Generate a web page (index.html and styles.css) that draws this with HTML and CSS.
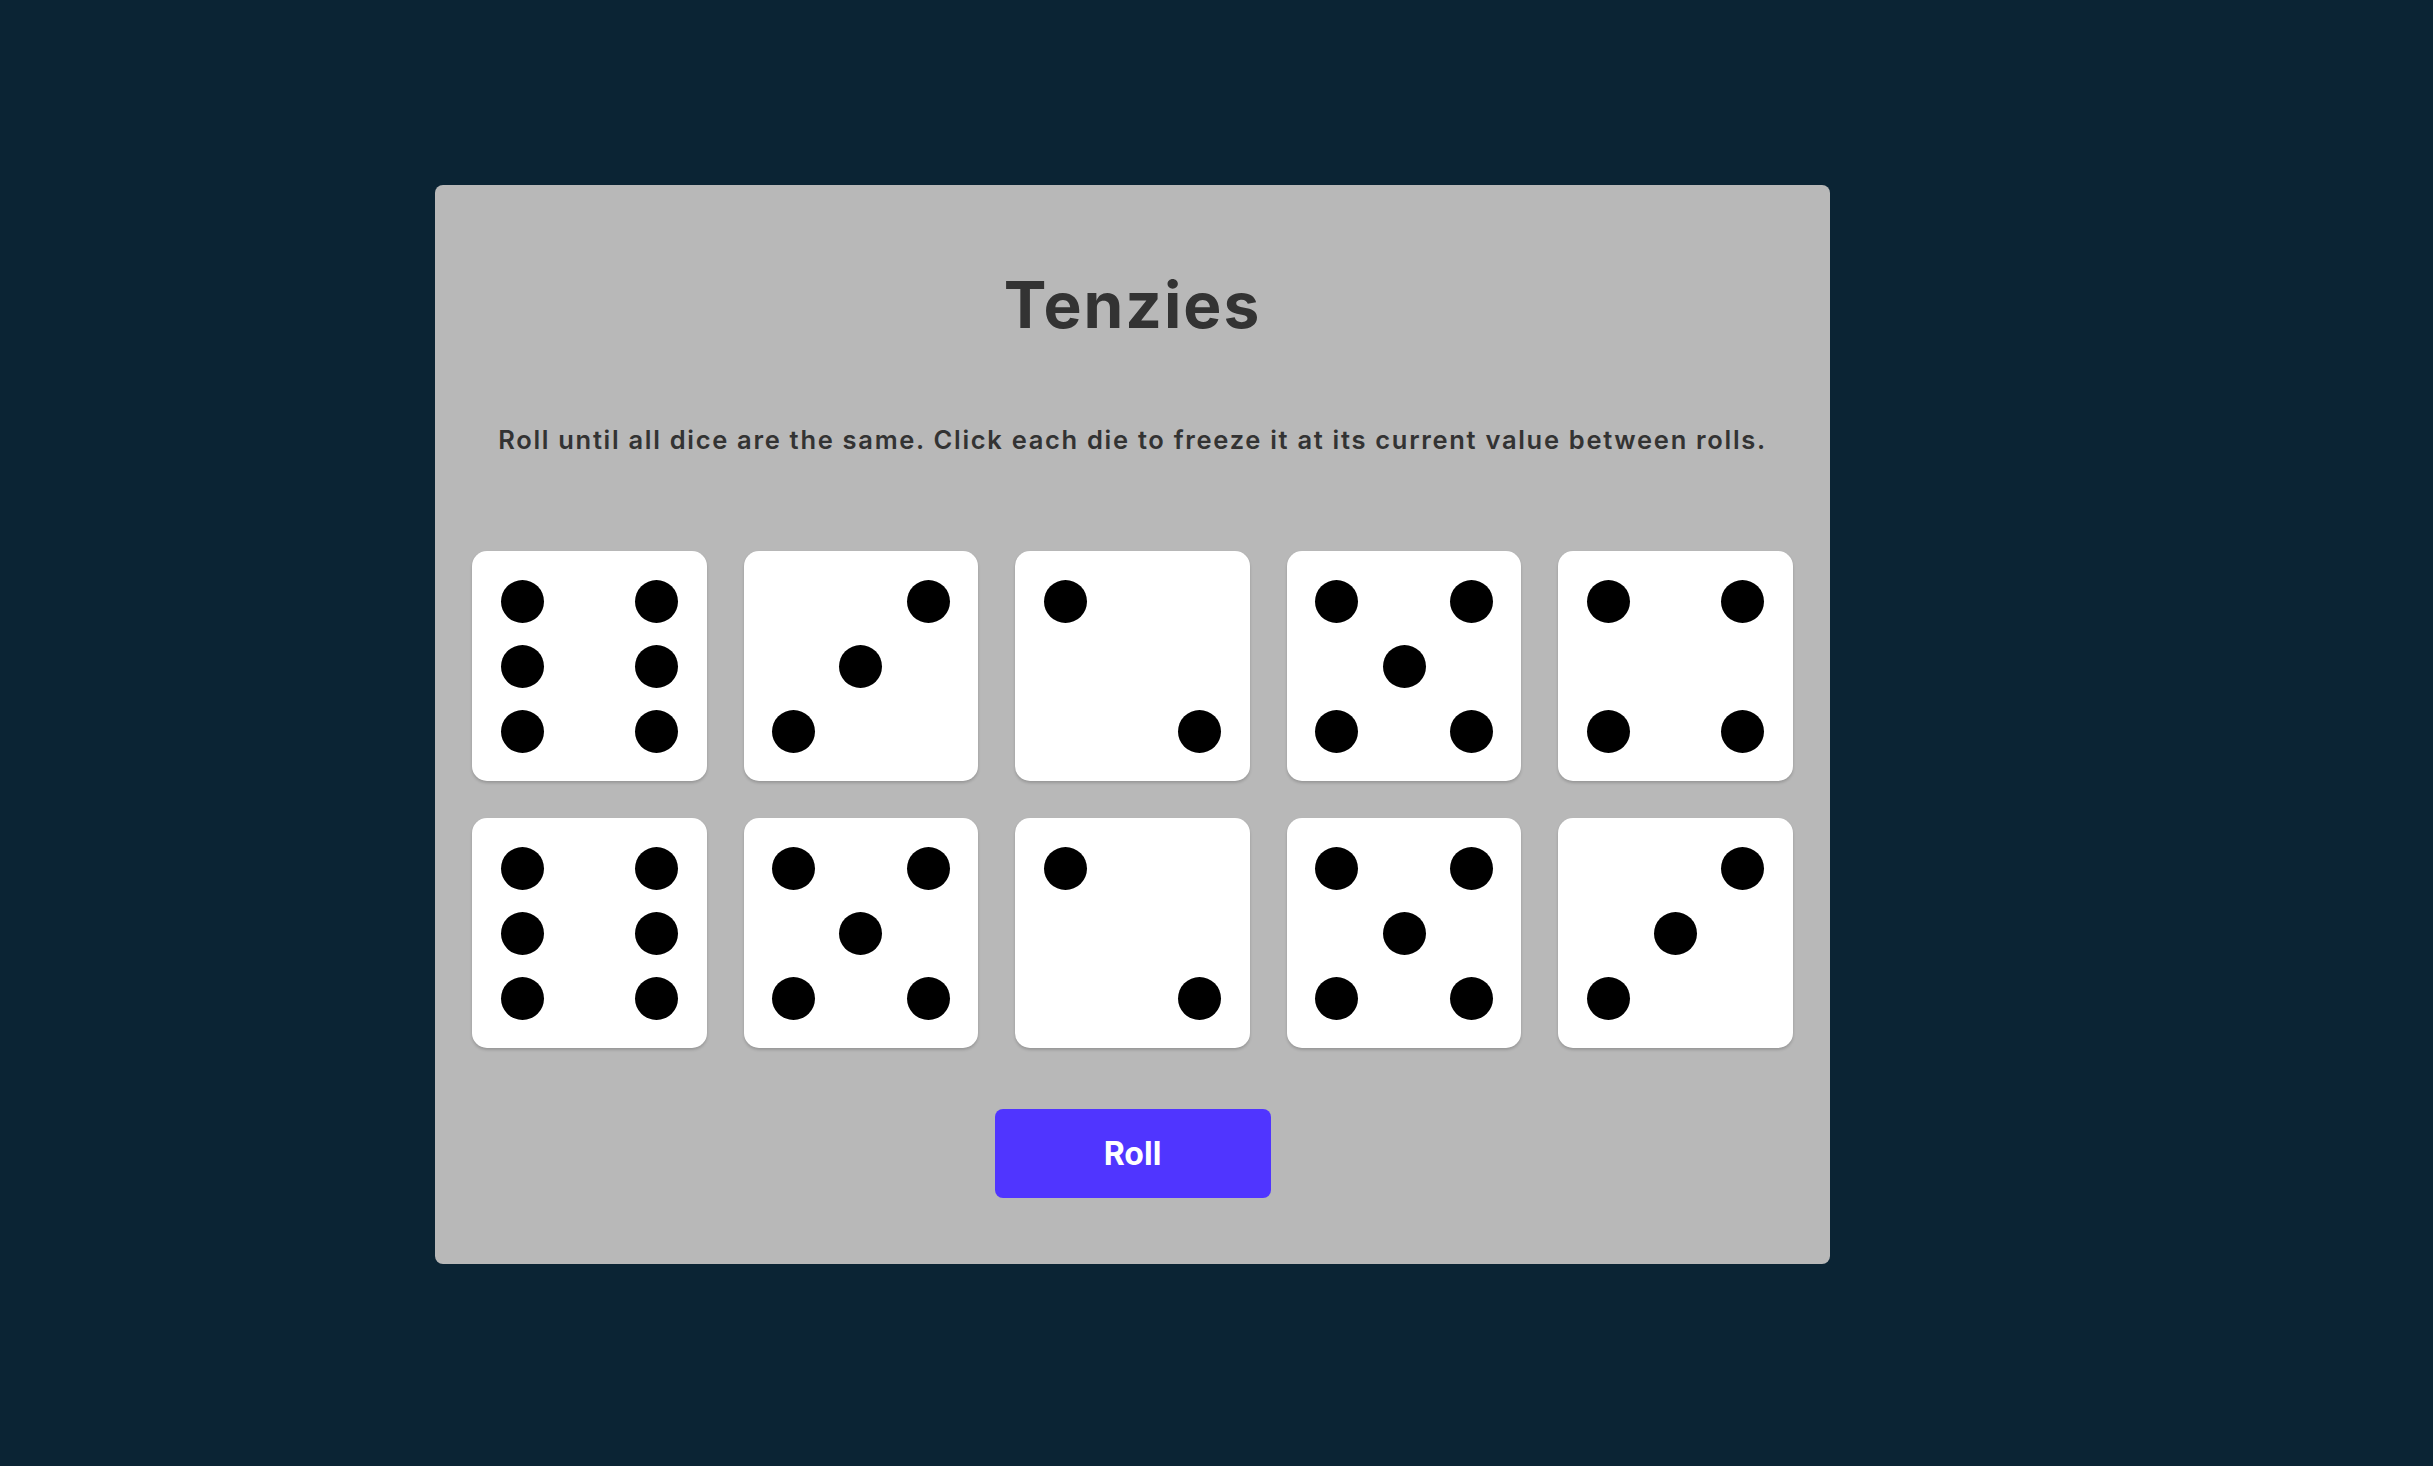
FILE: index.html
```html
<!DOCTYPE html>
<html lang="en">
<head>
<meta charset="utf-8">
<title>Tenzies</title>
<link rel="stylesheet" href="styles.css">
</head>
<body>
<main class="panel">
  <h1 class="title">Tenzies</h1>
  <p class="instructions">Roll until all dice are the same. Click each die to freeze it at its current value between rolls.</p>
  <div class="dice">
    <div class="die"><span class="pip tl"></span><span class="pip tr"></span><span class="pip ml"></span><span class="pip mr"></span><span class="pip bl"></span><span class="pip br"></span></div>
    <div class="die"><span class="pip tr"></span><span class="pip c"></span><span class="pip bl"></span></div>
    <div class="die"><span class="pip tl"></span><span class="pip br"></span></div>
    <div class="die"><span class="pip tl"></span><span class="pip tr"></span><span class="pip c"></span><span class="pip bl"></span><span class="pip br"></span></div>
    <div class="die"><span class="pip tl"></span><span class="pip tr"></span><span class="pip bl"></span><span class="pip br"></span></div>
    <div class="die"><span class="pip tl"></span><span class="pip tr"></span><span class="pip ml"></span><span class="pip mr"></span><span class="pip bl"></span><span class="pip br"></span></div>
    <div class="die"><span class="pip tl"></span><span class="pip tr"></span><span class="pip c"></span><span class="pip bl"></span><span class="pip br"></span></div>
    <div class="die"><span class="pip tl"></span><span class="pip br"></span></div>
    <div class="die"><span class="pip tl"></span><span class="pip tr"></span><span class="pip c"></span><span class="pip bl"></span><span class="pip br"></span></div>
    <div class="die"><span class="pip tr"></span><span class="pip c"></span><span class="pip bl"></span></div>
  </div>
  <button class="roll">Roll</button>
</main>
</body>
</html>
```

FILE: styles.css
```css
html, body {
  margin: 0;
  height: 100%;
}

body {
  background: #0b2434;
  padding: 185px 0 0 435px;
  box-sizing: border-box;
  font-family: Inter, "Open Sans", sans-serif;
}

.panel {
  width: 1395px;
  height: 1079px;
  box-sizing: border-box;
  background: #b8b8b8;
  border-radius: 8px;
  padding: 88px 37px 0;
  display: flex;
  flex-direction: column;
  align-items: center;
}

.title {
  margin: 0;
  font-size: 64px;
  line-height: 64px;
  font-weight: 700;
  color: #333333;
  letter-spacing: 2px;
}

.instructions {
  margin: 90px 0 0;
  font-size: 25.5px;
  line-height: 26px;
  font-weight: 600;
  color: #333333;
  letter-spacing: 1.7px;
}

.dice {
  margin-top: 98px;
  align-self: stretch;
  display: grid;
  grid-template-columns: repeat(5, 1fr);
  grid-auto-rows: 230px;
  gap: 37px;
}

.die {
  background: #ffffff;
  border-radius: 15px;
  box-shadow: 0 2px 3px rgba(0, 0, 0, 0.18);
  padding: 28.5px;
  display: grid;
  grid-template-columns: 43px 43px 43px;
  grid-template-rows: 43px 43px 43px;
  justify-content: space-between;
  align-content: space-between;
}

.pip {
  width: 43px;
  height: 43px;
  border-radius: 50%;
  background: #000000;
}

.tl { grid-area: 1 / 1; }
.tr { grid-area: 1 / 3; }
.ml { grid-area: 2 / 1; }
.mr { grid-area: 2 / 3; }
.c  { grid-area: 2 / 2; }
.bl { grid-area: 3 / 1; }
.br { grid-area: 3 / 3; }

.roll {
  margin-top: 61px;
  width: 276px;
  height: 89px;
  border: none;
  border-radius: 8px;
  background: #5035ff;
  color: #ffffff;
  font-family: Inter, "Open Sans", sans-serif;
  font-size: 32px;
  font-weight: 700;
  cursor: pointer;
}
```
